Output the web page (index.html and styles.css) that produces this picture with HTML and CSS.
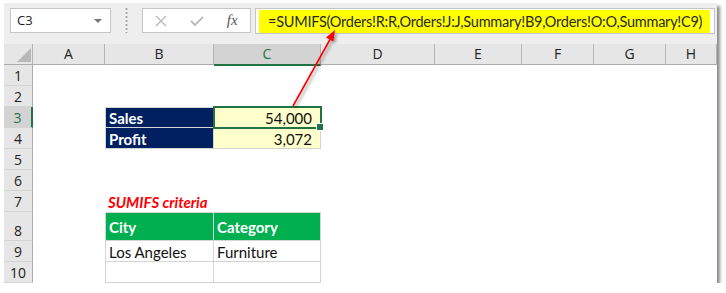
FILE: index.html
```html
<!DOCTYPE html>
<html lang="en">
<head>
  <meta charset="UTF-8">
  <meta name="viewport" content="width=device-width, initial-scale=1.0">
  <title>SUMIFS example</title>
  <link rel="stylesheet" href="styles.css">
</head>
<body>
  <div class="window">
    <div class="formula-bar">
      <div class="name-box">C3<span class="caret"></span></div>
      <div class="grip"></div>
      <div class="fx-box">
        <span class="fx-btn">
          <svg width="12" height="12" viewBox="0 0 12 12"><path d="M1 1 L11 11 M11 1 L1 11" stroke="#b9b9b9" stroke-width="1.4" fill="none"/></svg>
        </span>
        <span class="fx-btn">
          <svg width="14" height="12" viewBox="0 0 14 12"><path d="M1 6 L5 10 L13 2" stroke="#b9b9b9" stroke-width="1.8" fill="none"/></svg>
        </span>
        <span class="fx-btn fx-label">fx</span>
      </div>
      <div class="formula-input">
        <div class="formula-text">=SUMIFS(Orders!R:R,Orders!J:J,Summary!B9,Orders!O:O,Summary!C9)</div>
      </div>
    </div>

    <div class="sheet">
      <div class="row head-row">
        <div class="corner"><span class="corner-tri"></span></div>
        <div class="col-head">A</div>
        <div class="col-head">B</div>
        <div class="col-head active">C</div>
        <div class="col-head">D</div>
        <div class="col-head">E</div>
        <div class="col-head">F</div>
        <div class="col-head">G</div>
        <div class="col-head">H</div>
      </div>
      <div class="row"><div class="row-head">1</div></div>
      <div class="row"><div class="row-head">2</div></div>
      <div class="row">
        <div class="row-head active">3</div>
        <div class="cell"></div>
        <div class="cell box box-left box-top navy">Sales</div>
        <div class="cell box box-top cream num selected">54,000</div>
      </div>
      <div class="row">
        <div class="row-head">4</div>
        <div class="cell"></div>
        <div class="cell box box-left navy">Profit</div>
        <div class="cell box cream num">3,072</div>
      </div>
      <div class="row"><div class="row-head">5</div></div>
      <div class="row"><div class="row-head">6</div></div>
      <div class="row">
        <div class="row-head">7</div>
        <div class="cell"></div>
        <div class="cell caption">SUMIFS criteria</div>
      </div>
      <div class="row tall">
        <div class="row-head">8</div>
        <div class="cell"></div>
        <div class="cell box box-left box-top green">City</div>
        <div class="cell box box-top green">Category</div>
      </div>
      <div class="row">
        <div class="row-head">9</div>
        <div class="cell"></div>
        <div class="cell box box-left">Los Angeles</div>
        <div class="cell box">Furniture</div>
      </div>
      <div class="row">
        <div class="row-head">10</div>
        <div class="cell"></div>
        <div class="cell box box-left"></div>
        <div class="cell box"></div>
      </div>
    </div>

    <!-- arrow from C3 up to the formula -->
    <svg class="callout" width="713" height="280" viewBox="0 0 713 280">
      <line x1="289" y1="103" x2="326" y2="36.5" stroke="#ff0000" stroke-width="1.6"/>
      <polygon points="331,27 329.4,38.6 322,34.6" fill="#ff0000"/>
    </svg>
  </div>
</body>
</html>
```

FILE: styles.css
```css
* {
  margin: 0;
  padding: 0;
  box-sizing: border-box;
}

body {
  background: #fff;
  padding: 3px 0 0 4px;
  font-family: Lato, "Liberation Sans", sans-serif;
  color: #222;
}

.window {
  position: relative;
  width: 713px;
  height: 280px;
  background: #eeeeee;
  box-shadow: 3px 3px 3px rgba(0, 0, 0, 0.45);
}

/* formula bar */
.formula-bar {
  display: flex;
  align-items: flex-start;
  height: 41px;
  padding: 5px 0 0 6px;
}

.name-box {
  position: relative;
  width: 101px;
  height: 25px;
  background: #fff;
  border: 1px solid #c6c6c6;
  padding-left: 6px;
  font-family: "Open Sans", sans-serif;
  font-size: 13px;
  line-height: 23px;
  color: #222;
}

.caret {
  position: absolute;
  right: 8px;
  top: 10px;
  border-left: 4px solid transparent;
  border-right: 4px solid transparent;
  border-top: 4px solid #777;
}

.grip {
  width: 31px;
  height: 25px;
  background: radial-gradient(circle, #a6a6a6 1px, transparent 1.2px) center 7px / 3px 4px repeat-y;
}

.fx-box {
  display: flex;
  width: 109px;
  height: 25px;
  background: #fff;
  border: 1px solid #c6c6c6;
}

.fx-btn {
  display: flex;
  align-items: center;
  justify-content: center;
  width: 36px;
  height: 23px;
}

.fx-label {
  font-family: "Liberation Serif", serif;
  font-style: italic;
  font-size: 15px;
  color: #555;
}

.formula-input {
  width: 460px;
  height: 26px;
  margin-left: 4px;
  background: #fff;
  border: 1px solid #c6c6c6;
  padding: 1px 4px 0 3px;
}

.formula-text {
  height: 23px;
  background: #ffff00;
  padding-left: 9px;
  font-size: 14.5px;
  letter-spacing: -0.25px;
  line-height: 23px;
  color: #2a2a2a;
  white-space: nowrap;
  overflow: hidden;
}

/* sheet grid */
.row {
  display: grid;
  grid-template-columns: 29px 72px 109px 107px 114px 87px 72px 72px 51px;
  height: 21px;
  background: #fff;
}

.row.tall {
  height: 29px;
}

.head-row {
  background: #e6e6e6;
  border-bottom: 1px solid #ababab;
}

.corner {
  display: flex;
  justify-content: flex-end;
  align-items: flex-end;
  padding: 0 1px 3px 0;
  border-right: 1px solid #b4b4b4;
}

.corner-tri {
  border-left: 14px solid transparent;
  border-bottom: 14px solid #b8b8b8;
}

.col-head {
  border-right: 1px solid #b4b4b4;
  text-align: center;
  font-family: "Open Sans", sans-serif;
  font-size: 14px;
  line-height: 20px;
  color: #222;
}

.col-head.active {
  background: #d3d3d3;
  color: #217346;
  border-bottom: 2px solid #217346;
  margin-bottom: -1px;
}

.row-head {
  display: flex;
  align-items: flex-end;
  justify-content: center;
  background: #e6e6e6;
  border-right: 1px solid #ababab;
  border-bottom: 1px solid #d4d4d4;
  font-family: "Open Sans", sans-serif;
  font-size: 14px;
  line-height: 19px;
  color: #222;
}

.row-head.active {
  background: #d3d3d3;
  color: #217346;
  border-right: 2px solid #217346;
}

.cell {
  display: flex;
  align-items: flex-end;
  padding: 0 3px;
  font-size: 15px;
  line-height: 18px;
  white-space: nowrap;
  color: #111;
}

.box {
  border-right: 1px solid #d4d4d4;
  border-bottom: 1px solid #d4d4d4;
}

.box-left {
  border-left: 1px solid #d4d4d4;
}

.box-top {
  border-top: 1px solid #d4d4d4;
}

.navy {
  background: #002060;
  color: #fff;
  font-weight: 700;
}

.cream {
  background: #ffffcc;
}

.num {
  justify-content: flex-end;
  padding-right: 8px;
}

.selected {
  position: relative;
  outline: 2px solid #217346;
  outline-offset: -1px;
}

.selected::after {
  content: '';
  position: absolute;
  right: -4px;
  bottom: -4px;
  width: 6px;
  height: 6px;
  background: #217346;
  border: 1px solid #fff;
}

.caption {
  color: #ff0000;
  font-weight: 700;
  font-style: italic;
  padding-bottom: 1px;
}

.green {
  align-items: center;
  background: #00b050;
  color: #fff;
  font-weight: 700;
}

.callout {
  position: absolute;
  left: 0;
  top: 0;
  pointer-events: none;
  filter: drop-shadow(2px 2px 1.5px rgba(0, 0, 0, 0.35));
}
```
